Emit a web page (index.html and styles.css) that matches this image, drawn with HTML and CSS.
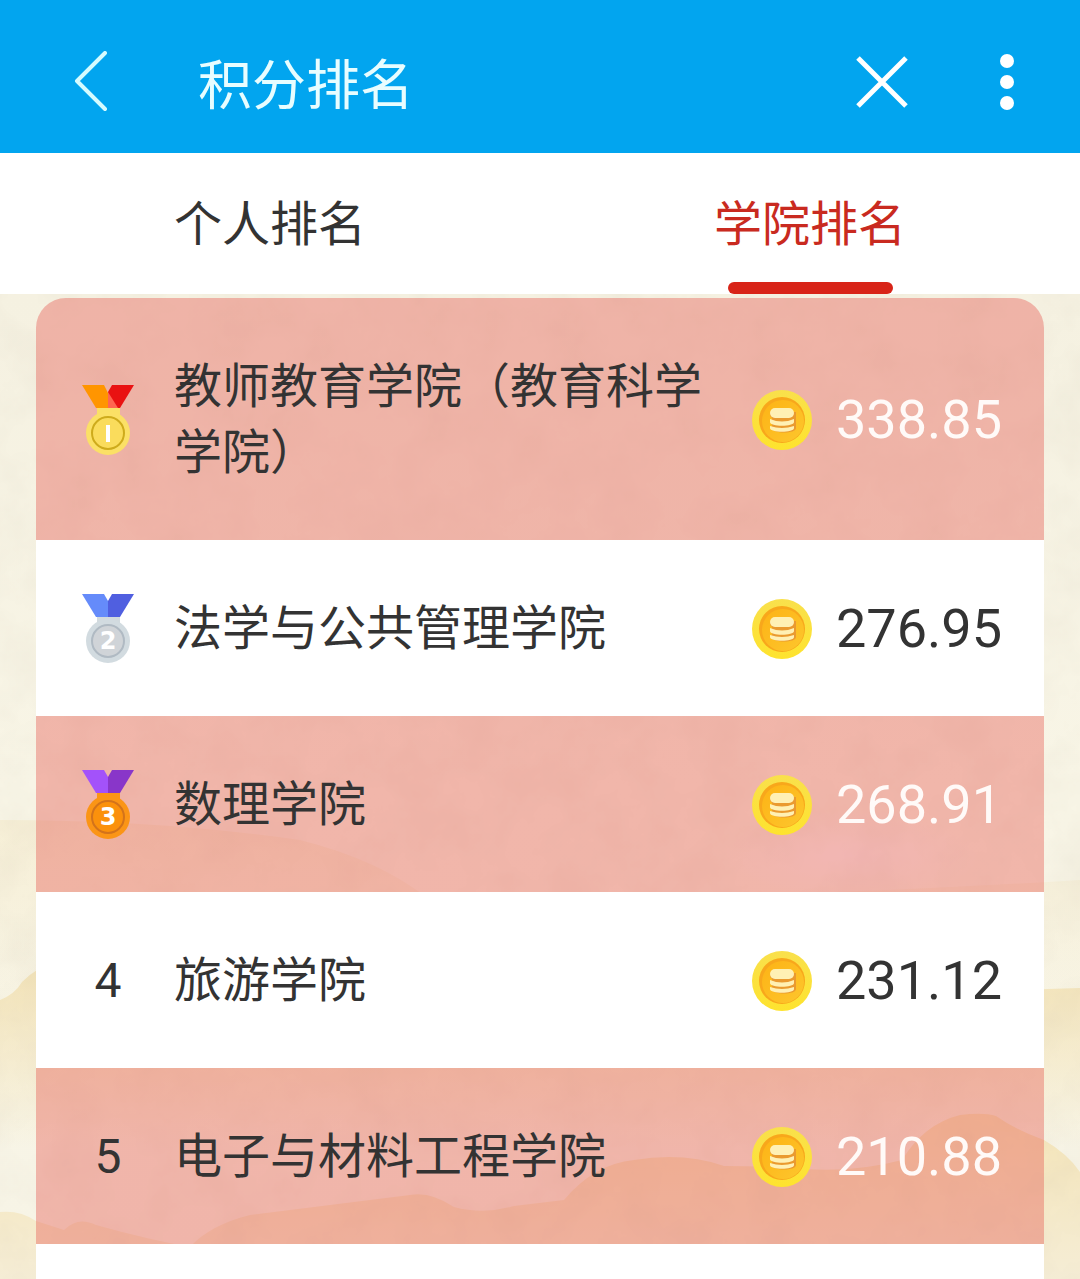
FILE: index.html
```html
<!DOCTYPE html>
<html lang="zh-CN">
<head>
  <meta charset="utf-8">
  <meta name="viewport" content="width=device-width, initial-scale=1">
  <title>积分排名</title>
  <link rel="stylesheet" href="styles.css">
</head>
<body>
  <!-- shared shapes -->
  <svg class="defs" width="0" height="0" aria-hidden="true">
    <defs>
      <linearGradient id="coinRim" x1="0" y1="0" x2="0" y2="1">
        <stop offset="0" stop-color="#f9e04c" />
        <stop offset="1" stop-color="#fee32e" />
      </linearGradient>
      <linearGradient id="coinFace" x1="0" y1="0" x2="1" y2="1">
        <stop offset="0" stop-color="#fdb315" />
        <stop offset="1" stop-color="#fdc62d" />
      </linearGradient>
      <symbol id="coin" viewBox="0 0 60 60">
        <circle cx="30" cy="30" r="30" fill="url(#coinRim)" />
        <circle cx="30" cy="30" r="23" fill="#f8a71b" />
        <circle cx="31" cy="31" r="21" fill="url(#coinFace)" />
        <path d="M20 22v16c0 6 24 6 24 0V22z" fill="#ea9a30" />
        <path d="M18 36q12 4 24 0v2c0 5-24 5-24 0z" fill="#fff0b4" />
        <path d="M18 29q12 5 24 0v3c0 5-24 5-24 0z" fill="#fff0b4" />
        <path d="M18 23v2c0 6 24 6 24 0v-2z" fill="#ea9a30" />
        <rect x="18" y="18" width="24" height="10" rx="5" fill="#fff0b4" />
      </symbol>
    </defs>
  </svg>

  <header class="topbar">
    <button class="icon-btn back" aria-label="返回">
      <svg width="36" height="62" viewBox="0 0 36 62"><path d="M33 2 5 30l28 28" /></svg>
    </button>
    <h1>积分排名</h1>
    <button class="icon-btn" aria-label="关闭">
      <svg width="52" height="52" viewBox="0 0 52 52"><path d="M2 2l48 48M50 2 2 50" /></svg>
    </button>
    <button class="icon-btn more" aria-label="更多">
      <svg width="14" height="56" viewBox="0 0 14 56">
        <circle cx="7" cy="7" r="7" /><circle cx="7" cy="28" r="7" /><circle cx="7" cy="49" r="7" />
      </svg>
    </button>
  </header>

  <nav class="tabs">
    <button class="tab">个人排名</button>
    <button class="tab active">学院排名</button>
  </nav>

  <main class="board">
    <!-- paper with washed hills -->
    <svg class="scene" viewBox="0 294 1080 985" preserveAspectRatio="none" aria-hidden="true">
      <defs>
        <linearGradient id="paper" x1="0" y1="0" x2="0" y2="1">
          <stop offset="0" stop-color="#f5f1e1" />
          <stop offset="0.5" stop-color="#f8f5e6" />
          <stop offset="1" stop-color="#f7f4e6" />
        </linearGradient>
        <linearGradient id="hill" x1="0" y1="0" x2="0" y2="1">
          <stop offset="0" stop-color="#f3e3b8" />
          <stop offset="1" stop-color="#f3e3b8" stop-opacity="0" />
        </linearGradient>
        <linearGradient id="hillFront" x1="0" y1="0" x2="0" y2="1">
          <stop offset="0" stop-color="#f5e5b8" />
          <stop offset="1" stop-color="#f5edd6" />
        </linearGradient>
        <radialGradient id="glow">
          <stop offset="0" stop-color="#fbf6f6" />
          <stop offset="1" stop-color="#fbf6f6" stop-opacity="0" />
        </radialGradient>
        <filter id="grain" x="0" y="0" width="100%" height="100%">
          <feTurbulence type="fractalNoise" baseFrequency="0.02" numOctaves="6" seed="4" />
          <feColorMatrix values="0 0 0 0 0.55  0 0 0 0 0.48  0 0 0 0 0.38  0.22 0 0 0 -0.08" />
        </filter>
      </defs>
      <rect y="294" width="1080" height="985" fill="url(#paper)" />
      <path d="M0 820q160 0 300 20 80 20 130 60 320 0 650-20v150H0z" fill="url(#hill)" opacity="0.35" />
      <ellipse cx="850" cy="855" rx="130" ry="45" fill="url(#glow)" />
      <path d="M0 1000q15-6 22-18 8-8 18-14 160-8 300 30 120 20 250 0 180 0 490-10v160H0z" fill="url(#hill)" />
      <path d="M0 1212q20-2 36 9l28 9q14-14 32-5 50 14 94 22 20-22 60-32l80-10 80-10q20-4 44 12 30 8 60-1l50-6q30-36 70-40 50-8 90 6 40 0 66 2 60 6 112-8 22-36 58-45 24-3 36 1 20 14 48 24 24 14 36 32v111H0z" fill="url(#hillFront)" />
      <rect y="294" width="1080" height="985" filter="url(#grain)" />
    </svg>

    <ol class="ranking">
      <li class="row">
        <span class="rank">
          <svg class="medal" viewBox="0 0 52 70" role="img" aria-label="1">
            <path d="M0 0h22l4 8v15H14z" fill="#ff9500" />
            <path d="M30 0h22L38 23H26V7z" fill="#e91212" />
            <path d="M26 7l10 16H26z" fill="#ff6550" />
            <path d="M15 23h23v8H15z" fill="#fae066" />
            <circle cx="26" cy="48" r="22" fill="#fbe066" />
            <circle cx="26" cy="48" r="16" fill="#fadc5c" stroke="#ceab1c" stroke-width="2" />
            <rect x="24" y="40" width="4" height="17" fill="#fff" />
          </svg>
        </span>
        <span class="name">教师教育学院（教育科学学院）</span>
        <svg class="coin" aria-hidden="true"><use href="#coin" /></svg>
        <span class="score">338.85</span>
      </li>
      <li class="row">
        <span class="rank">
          <svg class="medal" viewBox="0 0 52 70" role="img" aria-label="2">
            <path d="M0 0h22l4 7v16H14z" fill="#658bfa" />
            <path d="M30 0h22L38 23H26V7z" fill="#505fe0" />
            <path d="M15 23h23v8H15z" fill="#d2dade" />
            <circle cx="26" cy="47" r="22" fill="#d2dbe0" />
            <circle cx="26" cy="47" r="16" fill="#d0d4d8" stroke="#b0bac3" stroke-width="2" />
            <text class="medal-num" x="26" y="55">2</text>
          </svg>
        </span>
        <span class="name">法学与公共管理学院</span>
        <svg class="coin" aria-hidden="true"><use href="#coin" /></svg>
        <span class="score">276.95</span>
      </li>
      <li class="row">
        <span class="rank">
          <svg class="medal" viewBox="0 0 52 70" role="img" aria-label="3">
            <path d="M0 0h22l4 7v16H14z" fill="#a352fa" />
            <path d="M30 0h22L38 23H26V7z" fill="#8936c9" />
            <path d="M15 23h23v8H15z" fill="#fb9516" />
            <circle cx="26" cy="47" r="22" fill="#fb9516" />
            <circle cx="26" cy="47" r="16" fill="#fb910c" stroke="#d3731b" stroke-width="2" />
            <text class="medal-num" x="26" y="55">3</text>
          </svg>
        </span>
        <span class="name">数理学院</span>
        <svg class="coin" aria-hidden="true"><use href="#coin" /></svg>
        <span class="score">268.91</span>
      </li>
      <li class="row">
        <span class="rank">4</span>
        <span class="name">旅游学院</span>
        <svg class="coin" aria-hidden="true"><use href="#coin" /></svg>
        <span class="score">231.12</span>
      </li>
      <li class="row">
        <span class="rank">5</span>
        <span class="name">电子与材料工程学院</span>
        <svg class="coin" aria-hidden="true"><use href="#coin" /></svg>
        <span class="score">210.88</span>
      </li>
    </ol>
  </main>
</body>
</html>
```
FILE: styles.css
```css
* {
  box-sizing: border-box;
}

body {
  margin: 0;
  min-height: 100vh;
  display: flex;
  flex-direction: column;
  font-family: Roboto, "Noto Sans CJK SC", sans-serif;
  font-size: 48px;
  color: #333;
  background: #f6f2e2;
}

button {
  font: inherit;
  color: inherit;
  background: none;
  border: none;
  padding: 0;
  cursor: pointer;
}

.defs {
  position: absolute;
}

/* top bar */
.topbar {
  display: flex;
  align-items: center;
  padding: 10px 66px 0 72px;
  min-height: 153px;
  background: #02a5ef;
  color: #fff;
}

.topbar h1 {
  flex: 1;
  margin: 0 0 0 90px;
  padding-top: 10px;
  font-size: 54px;
  font-weight: 400;
  line-height: 80px;
  color: #e8fdff;
}

.icon-btn svg {
  display: block;
  fill: none;
  stroke: #fff;
  stroke-width: 5;
}

.back svg {
  stroke: #d5fbff;
  stroke-width: 4;
  stroke-linecap: round;
  stroke-linejoin: round;
}

.more {
  margin-left: 92px;
}

.more svg {
  fill: #fff;
  stroke: none;
}

/* tabs */
.tabs {
  display: flex;
  background: #fff;
}

.tab {
  flex: 1;
  display: flex;
  flex-direction: column;
  align-items: center;
  padding-top: 39px;
  line-height: 66px;
}

.tab::after {
  content: "";
  width: 165px;
  height: 12px;
  margin-top: 24px;
  border-radius: 6px;
}

.tab.active {
  color: #c92a20;
}

.tab.active::after {
  background: #d82418;
}

/* ranking */
.board {
  position: relative;
  flex: 1;
  display: flex;
  padding: 4px 36px 0;
}

.scene {
  position: absolute;
  inset: 0;
  width: 100%;
  height: 100%;
}

.ranking {
  position: relative;
  flex: 1;
  display: flex;
  flex-direction: column;
  margin: 0;
  padding: 0;
  list-style: none;
  border-radius: 30px 30px 0 0;
  overflow: hidden;
}

.ranking::after {
  content: "";
  flex: 1;
  background: #fff;
}

.row {
  display: flex;
  align-items: center;
  padding: 56px 42px 54px 36px;
  line-height: 66px;
  background: #fff;
}

.row:nth-child(odd) {
  background: rgba(229, 87, 80, 0.4);
}

.rank {
  width: 72px;
  margin-right: 30px;
  text-align: center;
}

.medal {
  display: block;
  width: 52px;
  height: 70px;
  margin: -2px auto;
}

.medal-num {
  font: bold 24px "DejaVu Sans", sans-serif;
  fill: #fff;
  text-anchor: middle;
}

.name {
  flex: 1;
}

.coin {
  width: 60px;
  height: 60px;
  margin: 0 24px;
}

.score {
  font-size: 54px;
}

.row:nth-child(odd) .score {
  color: #fffaf8;
}
```
